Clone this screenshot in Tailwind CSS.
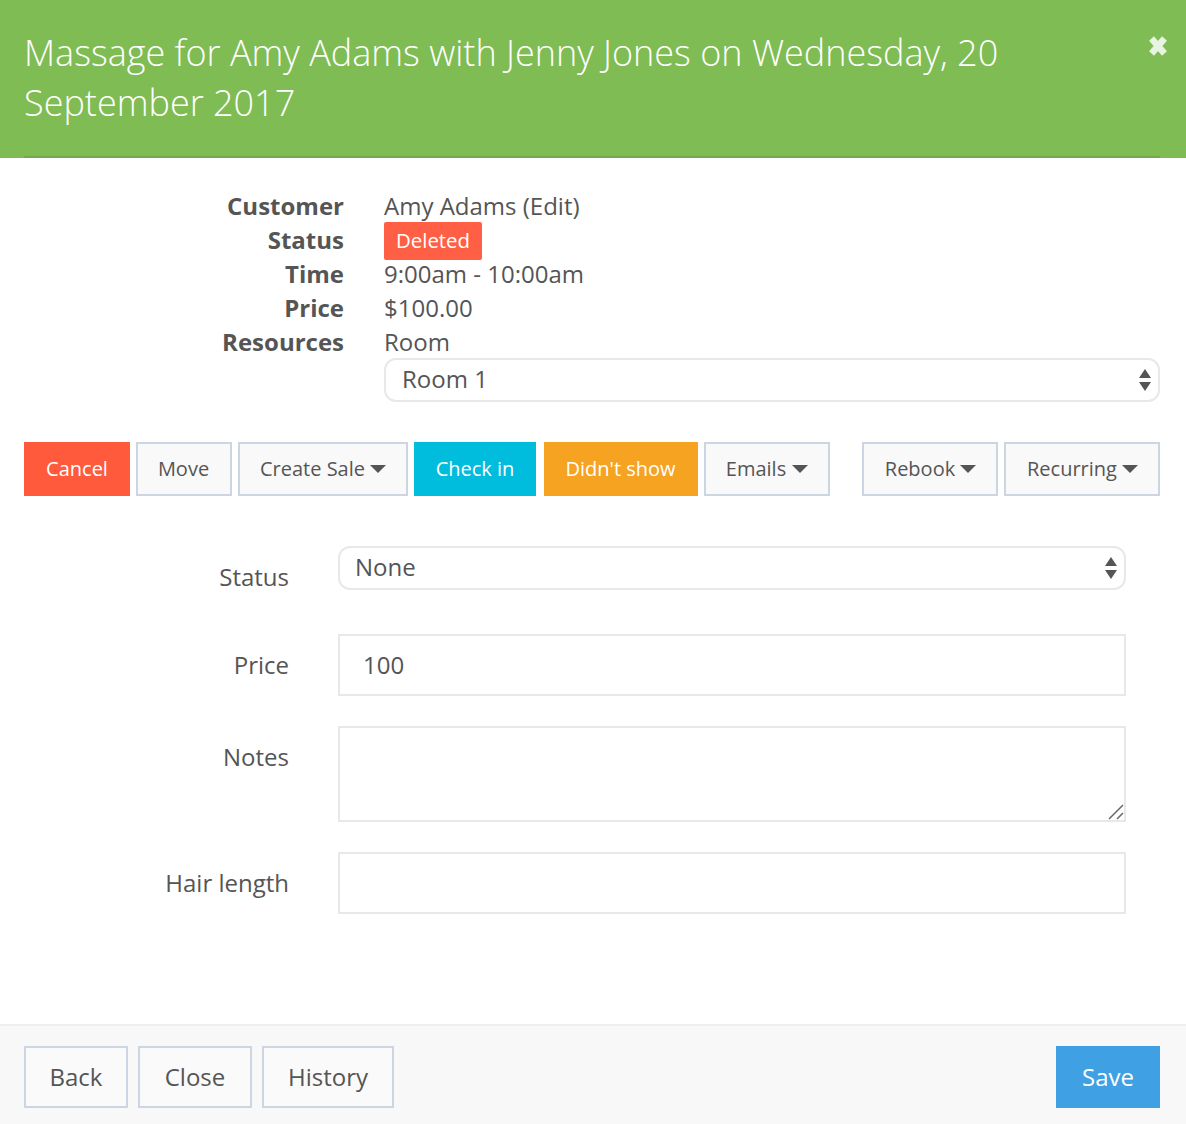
<!DOCTYPE html>
<html lang="en">
<head>
    <meta charset="UTF-8">
    <meta name="viewport" content="width=device-width, initial-scale=1.0">
    <title>Booking</title>
    <script src="https://cdn.jsdelivr.net/npm/@tailwindcss/browser@4"></script>
</head>
<body class="bg-white font-['Open_Sans',sans-serif] text-[#555555]">
    <div class="w-[1186px] h-[1124px] flex flex-col overflow-hidden">

        <!-- header -->
        <header class="relative h-[158px] bg-[#7fbc54] px-6">
            <h1 class="pt-[28px] w-[1010px] text-[36px] leading-[50px] font-light text-white">Massage for Amy Adams with Jenny Jones on Wednesday, 20 September 2017</h1>
            <div class="absolute left-6 right-[26px] bottom-0 h-[2px] bg-[#74a94e]"></div>
            <svg class="absolute left-[1148px] top-[36px] w-5 h-5" viewBox="0 0 20 20"><path d="M3.5 2.5 16.5 17.5M16.5 2.5 3.5 17.5" stroke="#e9f3e1" stroke-width="6.5" fill="none"/></svg>
        </header>

        <!-- booking details -->
        <section class="pt-[31px] pl-6 pr-[26px]">
            <div class="grid grid-cols-[320px_1fr] gap-x-10 text-[24px] leading-[34px]">
                <div class="text-right font-bold">Customer</div>
                <div>Amy Adams (Edit)</div>
                <div class="text-right font-bold">Status</div>
                <div class="flex items-start h-[34px] -mt-[1px]"><span class="h-[38px] px-3 rounded-[2px] bg-[#ff6045] text-white text-[20.4px] leading-[36px]">Deleted</span></div>
                <div class="text-right font-bold">Time</div>
                <div>9:00am - 10:00am</div>
                <div class="text-right font-bold">Price</div>
                <div>$100.00</div>
                <div class="text-right font-bold">Resources</div>
                <div>Room</div>
                <div></div>
                <div class="relative -mt-[1px]">
                    <select class="block w-full h-[44px] appearance-none bg-white border-2 border-[#e8e8e8] rounded-[12px] pl-4 pb-[3px] text-[24px] text-[#555555]"><option>Room 1</option></select>
                    <svg class="absolute right-[9px] top-[11px] w-3 h-[22px]" viewBox="0 0 12 22"><path d="M6 0 12 9H0ZM0 13H12L6 22Z" fill="#555555"/></svg>
                </div>
            </div>
        </section>

        <!-- actions -->
        <nav class="mt-10 ml-6 w-[1136px] flex text-[20px] leading-[26px]">
            <button class="w-[106px] h-[54px] bg-[#ff5a3c] text-white">Cancel</button>
            <button class="ml-[6px] w-[96px] h-[54px] bg-[#f9f9f9] border-2 border-[#ccd6e3] pr-[1px]">Move</button>
            <button class="ml-[6px] w-[170px] h-[54px] bg-[#f9f9f9] border-2 border-[#ccd6e3] flex items-center justify-center gap-[5px]">Create Sale <svg class="w-4 h-2" viewBox="0 0 16 8"><path d="M0 0H16L8 8Z" fill="#555555"/></svg></button>
            <button class="ml-[6px] w-[122px] h-[54px] bg-[#00bcdd] text-white">Check in</button>
            <button class="ml-2 w-[154px] h-[54px] bg-[#f6a321] text-white pr-[1px]">Didn't show</button>
            <button class="ml-[6px] w-[126px] h-[54px] bg-[#f9f9f9] border-2 border-[#ccd6e3] flex items-center justify-center gap-[6px]">Emails <svg class="w-4 h-2" viewBox="0 0 16 8"><path d="M0 0H16L8 8Z" fill="#555555"/></svg></button>
            <button class="ml-8 w-[136px] h-[54px] bg-[#f9f9f9] border-2 border-[#ccd6e3] pl-[1px] flex items-center justify-center gap-[5px]">Rebook <svg class="w-4 h-2" viewBox="0 0 16 8"><path d="M0 0H16L8 8Z" fill="#555555"/></svg></button>
            <button class="ml-[6px] w-[156px] h-[54px] bg-[#f9f9f9] border-2 border-[#ccd6e3] pl-[1px] flex items-center justify-center gap-[5px]">Recurring <svg class="w-4 h-2" viewBox="0 0 16 8"><path d="M0 0H16L8 8Z" fill="#555555"/></svg></button>
        </nav>

        <!-- form -->
        <form class="mt-[50px] grid grid-cols-[265px_788px] gap-x-[49px] text-[24px] pl-6">
            <label class="text-right leading-[34px] pt-[14px] h-[88px]">Status</label>
            <div class="relative">
                <select class="block w-full h-[44px] appearance-none bg-white border-2 border-[#e8e8e8] rounded-[12px] pl-[15px] pb-[3px] text-[24px] text-[#555555]"><option>None</option></select>
                <svg class="absolute right-[9px] top-[11px] w-3 h-[22px]" viewBox="0 0 12 22"><path d="M6 0 12 9H0ZM0 13H12L6 22Z" fill="#555555"/></svg>
            </div>

            <label class="text-right leading-[34px] pt-[14px]">Price</label>
            <input class="block w-full h-[62px] mb-[30px] border-2 border-[#e8e8e8] pl-[23px] pr-6 pb-[1px] text-[24px] text-[#555555]" value="100">

            <label class="text-right leading-[34px] pt-[14px]">Notes</label>
            <div class="relative h-[96px] mb-[30px]">
                <textarea class="block w-full h-full resize-none border-2 border-[#e8e8e8] px-6 py-3 text-[24px]"></textarea>
                <svg class="absolute right-[2px] bottom-[2px] w-4 h-4" viewBox="0 0 16 16"><path d="M1 15 15 1M9 15 15 9" stroke="#666666" stroke-width="1.5" fill="none"/></svg>
            </div>

            <label class="text-right leading-[34px] pt-[14px]">Hair length</label>
            <input class="block w-full h-[62px] border-2 border-[#e8e8e8] px-6 text-[24px] text-[#555555]">
        </form>

        <!-- footer -->
        <footer class="mt-auto h-[100px] bg-[#f8f8f8] border-t-2 border-[#eeeeee] px-6 pt-5 flex text-[24px]">
            <button class="w-[104px] h-[62px] bg-[#fafafa] border-2 border-[#ccd6e3]">Back</button>
            <button class="ml-[10px] w-[114px] h-[62px] bg-[#fafafa] border-2 border-[#ccd6e3]">Close</button>
            <button class="ml-[10px] w-[132px] h-[62px] bg-[#fafafa] border-2 border-[#ccd6e3]">History</button>
            <button class="ml-auto mr-[2px] w-[104px] h-[62px] bg-[#3fa0e4] text-white">Save</button>
        </footer>
    </div>
</body>
</html>
